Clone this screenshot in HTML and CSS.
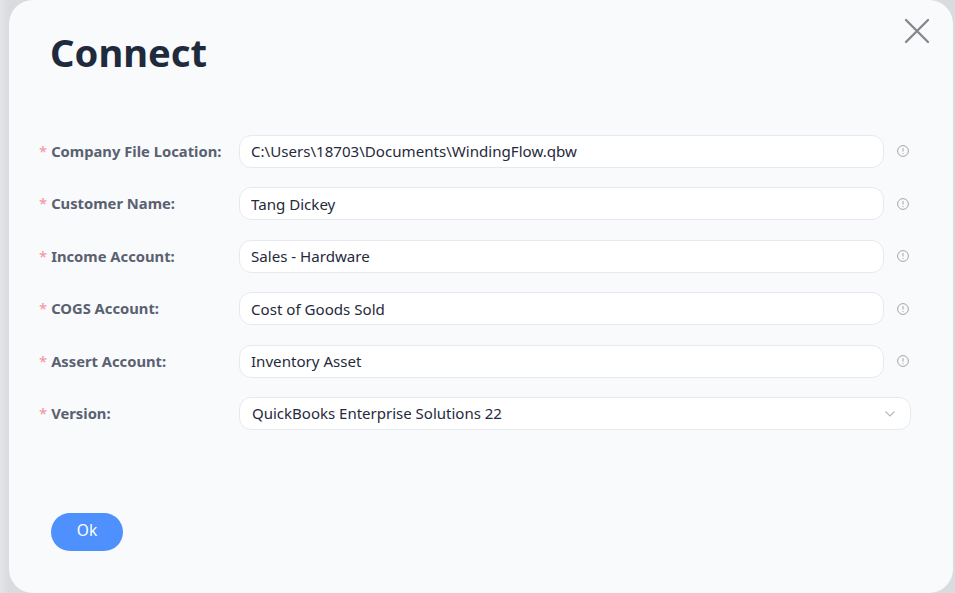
FILE: index.html
```html
<!DOCTYPE html>
<html lang="en">
<head>
<meta charset="utf-8">
<title>Connect</title>
<link rel="stylesheet" href="styles.css">
</head>
<body>
<main class="modal">
  <button class="close" type="button" aria-label="Close">
    <svg viewBox="0 0 26 26" width="26" height="26"><path d="M2 2L24 24M24 2L2 24"/></svg>
  </button>
  <h1 class="title">Connect</h1>
  <form class="form">
    <label class="label"><span class="star">*</span>Company File Location:</label>
    <div class="field"><input class="input" value="C:\Users\18703\Documents\WindingFlow.qbw"></div>
    <svg class="info" viewBox="0 0 12 12"><circle cx="6" cy="6" r="5.4"/><path d="M6 3v3.6M6 8v1"/></svg>

    <label class="label"><span class="star">*</span>Customer Name:</label>
    <div class="field"><input class="input" value="Tang Dickey"></div>
    <svg class="info" viewBox="0 0 12 12"><circle cx="6" cy="6" r="5.4"/><path d="M6 3v3.6M6 8v1"/></svg>

    <label class="label"><span class="star">*</span>Income Account:</label>
    <div class="field"><input class="input" value="Sales - Hardware"></div>
    <svg class="info" viewBox="0 0 12 12"><circle cx="6" cy="6" r="5.4"/><path d="M6 3v3.6M6 8v1"/></svg>

    <label class="label"><span class="star">*</span>COGS Account:</label>
    <div class="field"><input class="input" value="Cost of Goods Sold"></div>
    <svg class="info" viewBox="0 0 12 12"><circle cx="6" cy="6" r="5.4"/><path d="M6 3v3.6M6 8v1"/></svg>

    <label class="label"><span class="star">*</span>Assert Account:</label>
    <div class="field"><input class="input" value="Inventory Asset"></div>
    <svg class="info" viewBox="0 0 12 12"><circle cx="6" cy="6" r="5.4"/><path d="M6 3v3.6M6 8v1"/></svg>

    <label class="label"><span class="star">*</span>Version:</label>
    <div class="select">
      <span>QuickBooks Enterprise Solutions 22</span>
      <svg class="chevron" viewBox="0 0 10 6" width="10" height="6"><path d="M.5 .5L5 5L9.500 .5"/></svg>
    </div>
  </form>
  <button class="ok" type="button">Ok</button>
</main>
</body>
</html>
```
FILE: styles.css
```css
* { box-sizing: border-box; }
html, body { margin: 0; height: 100%; }
body {
  background: linear-gradient(90deg, #e3e4e7 0, #d9dbdf 9px, #d9dbdf 100%);
  font-family: "Noto Sans", "Open Sans", sans-serif;
  overflow: hidden;
}
.modal {
  position: relative;
  margin-left: 9px;
  width: 944px;
  height: 593px;
  padding: 26px 42px 0 30px;
  background: #f9fafc;
  border-radius: 24px;
  display: flex;
  flex-direction: column;
  align-items: flex-start;
}
.close {
  position: absolute;
  top: 18px;
  right: 23px;
  width: 26px;
  height: 26px;
  padding: 0;
  border: 0;
  background: none;
}
.close svg { display: block; fill: none; stroke: #85888e; stroke-width: 2.4; stroke-linecap: round; }
.title {
  margin: 0 0 0 11px;
  font-size: 38.2px;
  line-height: 52px;
  font-weight: 700;
  color: #1f2a3c;
}
.form {
  margin-top: 56.75px;
  display: grid;
  grid-template-columns: 200px 645px 27px;
  grid-auto-rows: 33px;
  row-gap: 19.5px;
  align-items: center;
}
.label {
  padding-bottom: 1px;
  font-size: 14.75px;
  font-weight: 700;
  color: #596170;
  white-space: nowrap;
}
.star { color: #f5919a; margin-right: 4px; font-weight: 400; }
.field { height: 33px; }
.input {
  display: block;
  width: 100%;
  height: 33px;
  padding: 0 11px;
  border: 1px solid #e6e9ef;
  border-radius: 12px;
  background: #fff;
  font: 15.1px "Noto Sans", "Open Sans", sans-serif;
  color: #1f2a3c;
  outline: none;
}
.info {
  justify-self: end;
  width: 12px;
  height: 12px;
  margin: 0 2px 0 0;
  fill: none;
  stroke: #a3a6ab;
  stroke-width: 1;
}
.select {
  grid-column: 2 / 4;
  height: 33px;
  padding: 0 15px 2px 12px;
  display: flex;
  align-items: center;
  justify-content: space-between;
  border: 1px solid #e6e9ef;
  border-radius: 12px;
  background: #fff;
  font-size: 15px;
  color: #1f2a3c;
}
.chevron { margin-top: 3px; fill: none; stroke: #b6b9c0; stroke-width: 1.2; }
.ok {
  margin: 83px 0 0 12px;
  width: 72px;
  height: 38px;
  padding: 0 0 4px;
  border: 0;
  border-radius: 19px;
  background: #4d90fe;
  color: #fff;
  font: 15.5px "Noto Sans", "Open Sans", sans-serif;
}
```
